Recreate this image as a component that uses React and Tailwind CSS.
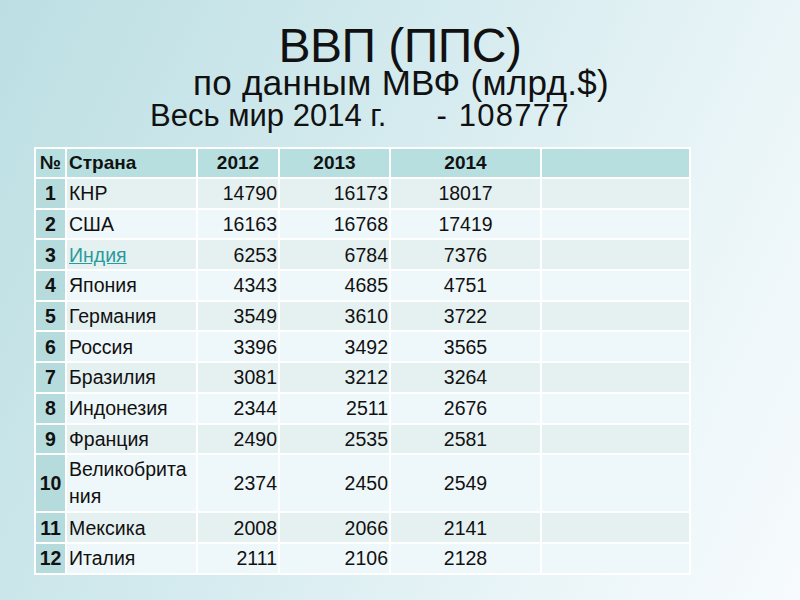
import React from "react";

const rows = [
  ["1", "КНР", "14790", "16173", "18017"],
  ["2", "США", "16163", "16768", "17419"],
  ["3", "Индия", "6253", "6784", "7376", true],
  ["4", "Япония", "4343", "4685", "4751"],
  ["5", "Германия", "3549", "3610", "3722"],
  ["6", "Россия", "3396", "3492", "3565"],
  ["7", "Бразилия", "3081", "3212", "3264"],
  ["8", "Индонезия", "2344", "2511", "2676"],
  ["9", "Франция", "2490", "2535", "2581"],
  ["10", "Великобритания", "2374", "2450", "2549"],
  ["11", "Мексика", "2008", "2066", "2141"],
  ["12", "Италия", "2111", "2106", "2128"],
];

function App() {
  return (
    <div className="w-[800px] h-[600px] overflow-hidden bg-[linear-gradient(115deg,#bcdfe3_0%,#d3eaee_40%,#eaf5f8_75%,#f7fbfd_100%)] font-['Liberation_Sans',Arial,sans-serif] text-[#111]">
      <div className="pt-[24px] text-center text-[48px] leading-[44px] tracking-[-0.5px]">ВВП (ППС)</div>
      <div className="text-center text-[35px] leading-[30px] pl-[2px] tracking-[0.3px]">по данным МВФ (млрд.$)</div>
      <div className="flex pl-[150px] text-[31px] leading-[34px] mt-[1px]">
        <span>Весь мир 2014 г.</span>
        <span className="ml-[50px]">-</span>
        <span className="ml-[12px] tracking-[1.3px]">108777</span>
      </div>

      <table className="ml-[34px] mt-[14px] border-collapse text-[19.5px] leading-[22px]">
        <thead>
          <tr className="h-[30px] bg-[#b7dfe0] font-bold text-[19px]">
            <th className="w-[31px] border-2 border-white px-0 text-center">№</th>
            <th className="w-[131px] border-2 border-white px-[2px] text-left">Страна</th>
            <th className="w-[82px] border-2 border-white">2012</th>
            <th className="w-[111px] border-2 border-white">2013</th>
            <th className="w-[151px] border-2 border-white">2014</th>
            <th className="w-[149px] border-2 border-white"></th>
          </tr>
        </thead>
        <tbody>
          {rows.map((r, i) => (
            <tr
              key={r[0]}
              className={
                (i % 2 === 0 ? "bg-[#e5f0f1] " : "bg-[#eef7f9] ") +
                (r[0] === "10" ? "h-[58px]" : "h-[30.7px]")
              }
            >
              <td className="border-2 border-white bg-[#b6dbdd] font-bold text-center px-0">{r[0]}</td>
              <td className="border-2 border-white px-[2px]">
                {r[5] ? (
                  <span className="text-[#2a9b9c] underline">{r[1]}</span>
                ) : r[0] === "10" ? (
                  <span className="block leading-[27px]">Великобрита<br />ния</span>
                ) : (
                  r[1]
                )}
              </td>
              <td className="border-2 border-white text-right pr-[1px]">{r[2]}</td>
              <td className="border-2 border-white text-right pr-[1px]">{r[3]}</td>
              <td className="border-2 border-white text-center">{r[4]}</td>
              <td className="border-2 border-white"></td>
            </tr>
          ))}
        </tbody>
      </table>
    </div>
  );
}

export default App;
